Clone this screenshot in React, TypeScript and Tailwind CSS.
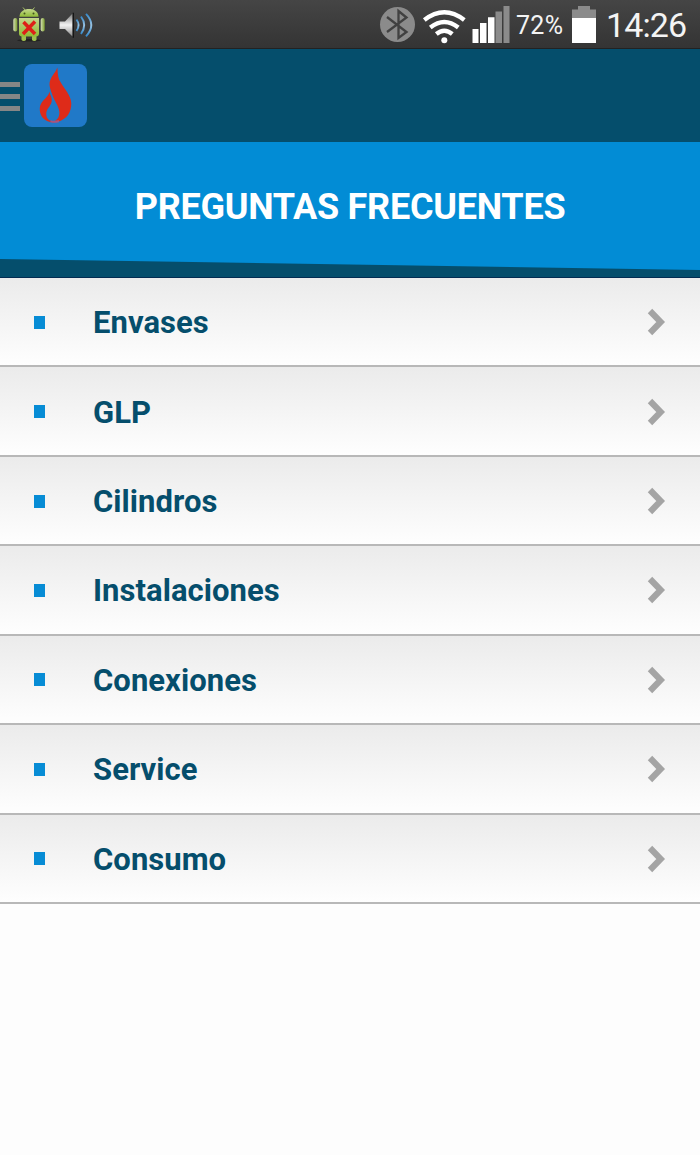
const topics = ['Envases', 'GLP', 'Cilindros', 'Instalaciones', 'Conexiones', 'Service', 'Consumo'];

function AndroidError() {
  return (
    <svg width="34" height="36" viewBox="12 6 34 36" className="block">
      <defs>
        <linearGradient id="robot" x1="0" y1="0" x2="0" y2="1">
          <stop offset="0" stopColor="#c3d68c" />
          <stop offset="1" stopColor="#8fbb35" />
        </linearGradient>
        <linearGradient id="arm" x1="0" y1="0" x2="1" y2="0">
          <stop offset="0" stopColor="#d5dfb4" />
          <stop offset="1" stopColor="#7da02f" />
        </linearGradient>
      </defs>
      <ellipse cx="29" cy="40.3" rx="12" ry="1.300" fill="#222" />
      <path d="M23 7.500l2.500 3M34.500 7.500l-2.500 3" stroke="#a9c267" strokeWidth="1" />
      <path d="M19.500 16.800C19.500 6.500 38.500 6.500 38.500 16.800Z" fill="url(#robot)" />
      <circle cx="24.500" cy="13.500" r="1" fill="#43551c" />
      <circle cx="33.500" cy="13.500" r="1" fill="#43551c" />
      <rect x="13.300" y="18" width="4" height="13.500" rx="2" fill="url(#arm)" />
      <rect x="40.700" y="18" width="4" height="13.500" rx="2" fill="url(#arm)" />
      <rect x="21.500" y="33" width="4.500" height="8" rx="1.800" fill="#9fbe4e" />
      <rect x="32" y="33" width="4.500" height="8" rx="1.800" fill="#9fbe4e" />
      <path d="M19 18h20v15.500a3 3 0 0 1-3 3H22a3 3 0 0 1-3-3Z" fill="url(#robot)" />
      <path d="M23.500 22L35 34M35 21.500L23 34" stroke="#dd2018" strokeWidth="3.500" />
    </svg>
  );
}

function Speaker() {
  return (
    <svg width="36" height="28" viewBox="58 11 36 28" className="block">
      <defs>
        <linearGradient id="cone" x1="0" y1="0" x2="0" y2="1">
          <stop offset="0" stopColor="#777" />
          <stop offset=".5" stopColor="#f2f2f2" />
          <stop offset="1" stopColor="#888" />
        </linearGradient>
        <linearGradient id="waves" x1="0" y1="0" x2="0" y2="1">
          <stop offset="0" stopColor="#3389cb" />
          <stop offset=".5" stopColor="#9ac3e2" />
          <stop offset="1" stopColor="#3389cb" />
        </linearGradient>
      </defs>
      <path d="M59.500 21.500h5.500L72.500 13.500v23L65 29h-5.500Z" fill="url(#cone)" />
      <path d="M73.300 12.800v25" stroke="#111" strokeWidth="1.200" />
      <path d="M76.500 19.500q4.200 5.500 0 11.500" fill="none" stroke="url(#waves)" strokeWidth="1.900" />
      <path d="M81 16.500q6.400 8.500 0 17.500" fill="none" stroke="url(#waves)" strokeWidth="1.900" />
      <path d="M86 13.800q10.600 11 0 22.500" fill="none" stroke="url(#waves)" strokeWidth="1.900" />
    </svg>
  );
}

function StatusIcons() {
  return (
    <svg width="132" height="40" viewBox="379 5 132 40" className="block">
      <circle cx="397.500" cy="24.500" r="17.500" fill="#8b8b8b" />
      <path d="M387 17L406.500 32L398.500 38V11L406.500 17.500L387 32" fill="none" stroke="#414141" strokeWidth="2.300" />
      <g fill="none" stroke="#fff" strokeWidth="4.400">
        <path d="M424.300 20Q444.300 4.500 464.300 20" />
        <path d="M430.300 27.500Q444.300 16.500 458.300 27.500" />
        <path d="M436.300 34Q444.300 27.500 452.300 34" />
      </g>
      <circle cx="444.300" cy="40.200" r="3" fill="#fff" />
      <path d="M472.500 29h6v14h-6ZM480 23h6.500v20H480ZM488 17.300h6.500V43H488Z" fill="#fff" />
      <path d="M495.500 11.500h6.500V43h-6.500ZM503.500 6h6v37h-6Z" fill="#8b8b8b" />
    </svg>
  );
}

function Battery() {
  return (
    <svg width="24" height="38" viewBox="572 5 24 38" className="block">
      <path d="M578 6h12v3.500h6V18h-24V9.500h6Z" fill="#8b8b8b" />
      <path d="M572 18h24v25h-24Z" fill="#fff" />
    </svg>
  );
}

function Flame() {
  return (
    <svg width="63" height="63" viewBox="0 0 63 63" className="ml-1 block">
      <rect width="63" height="63" rx="8" fill="#2079c8" />
      <path
        fill="#de2b19"
        d="M33.300 3.500C34 9 33.500 13 36.500 18C40 24.500 47 31 47.300 39.300C47.500 48 43 55.500 33.500 57.800L30.500 57.200C34 55.500 35.800 52 35.300 47.500C34.700 41.500 30 36.500 27.800 29.500C26 24 24.500 20 26.500 15.500C28.500 10.500 32 8 33.300 3.500Z"
      />
      <path
        fill="#de2b19"
        d="M25.500 27.500C25.500 30.500 27.800 32.500 27.800 36C27.800 41.500 22.500 44.500 22.300 49C22 53.500 24 56.500 28.500 57.300L30 58.200C21 58.500 16 52.500 15.800 46C15.500 39.500 19 37 21.500 34.200C23.700 31.800 25 30 25.500 27.500Z"
      />
      <path d="M26.500 57.200q4 1.300 8.500-.2" fill="none" stroke="#a65580" strokeWidth="2" />
    </svg>
  );
}

function Chevron() {
  return (
    <svg width="20" height="28" viewBox="0 0 20 28" className="block">
      <path d="M3 3L13.700 14L3 25" fill="none" stroke="#a4a4a4" strokeWidth="6.200" />
    </svg>
  );
}

export default function App() {
  return (
    <div className="flex h-[1155px] w-[700px] flex-col overflow-hidden bg-[#fdfdfd] font-['Roboto',sans-serif]">
      <header className="flex h-[49px] shrink-0 items-start border-b border-[#222] bg-linear-to-b from-[#454545] to-[#343434] text-[#f4f4f4]">
        <div className="pt-1.5 pl-3"><AndroidError /></div>
        <div className="pt-[11px] pl-3"><Speaker /></div>
        <div className="ml-[285px] pt-[5px]"><StatusIcons /></div>
        <span className="ml-[5px] w-[56px] pt-[9px] text-[25px] leading-[34px] tracking-[0.3px] whitespace-nowrap">72%</span>
        <div className="pt-[5px]"><Battery /></div>
        <span className="ml-[10px] pt-[5px] text-[34px] leading-[40px] tracking-[-0.9px] whitespace-nowrap">14:26</span>
      </header>

      <nav className="flex h-[93px] shrink-0 items-start bg-[#054e6c] pt-[15px]">
        <button aria-label="Menú" className="mt-[18px] flex w-5 flex-col gap-[7px]">
          <span className="h-[5px] w-full bg-[#868686]" />
          <span className="h-[5px] w-full bg-[#868686]" />
          <span className="h-[5px] w-full bg-[#868686]" />
        </button>
        <Flame />
      </nav>

      <section className="h-[136px] shrink-0 border-b border-[#032c52] bg-[#054e6c]">
        <div className="flex h-[129px] justify-center bg-[#028cd5] pt-[41px] [clip-path:polygon(0_0,100%_0,100%_128px,0_117px)]">
          <h1 className="text-[36px] leading-[48px] font-bold tracking-[-0.25px] whitespace-nowrap text-white">PREGUNTAS FRECUENTES</h1>
        </div>
      </section>

      <ul className="flex h-[626px] shrink-0 flex-col">
        {topics.map((topic) => (
          <li key={topic} className="flex flex-1 items-center border-b-2 border-[#b8b8b8] bg-linear-to-b from-[#ebebeb] to-[#fefefe] pt-px pr-[33px] pl-[34px]">
            <span className="mr-[48px] h-[13px] w-[11px] bg-[#078cd5]" />
            <span className="pt-[2px] text-[31px] leading-[40px] font-bold tracking-[0.05px] text-[#054e6c]">{topic}</span>
            <span className="ml-auto"><Chevron /></span>
          </li>
        ))}
      </ul>
    </div>
  );
}
